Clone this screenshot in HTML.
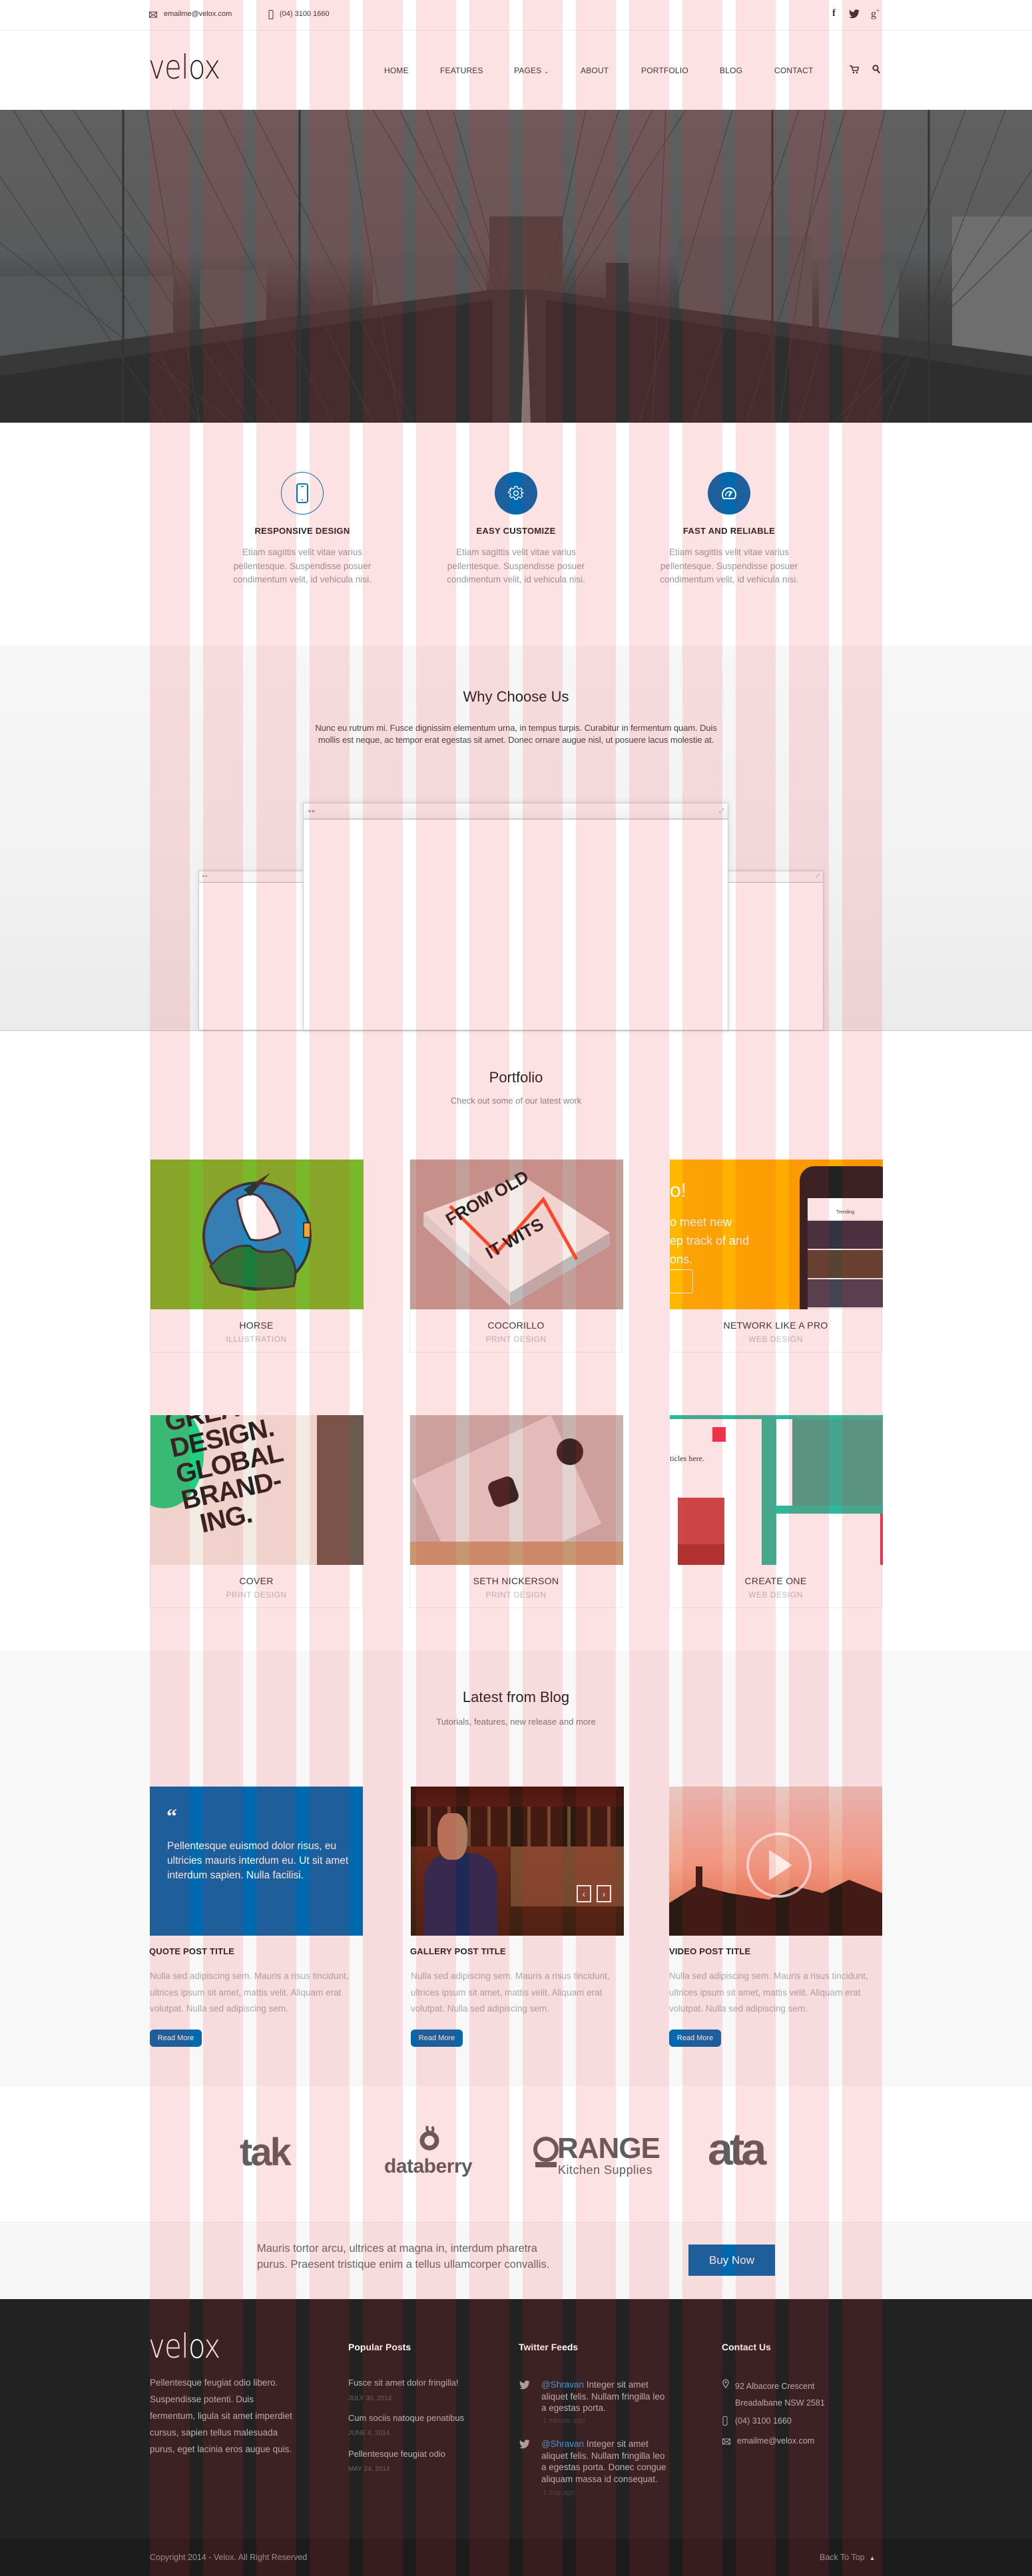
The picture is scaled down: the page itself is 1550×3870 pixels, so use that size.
<!DOCTYPE html>
<html><head><meta charset="utf-8">
<style>
*{margin:0;padding:0;box-sizing:border-box}
body{width:1550px;height:3870px;position:relative;background:#fff;font-family:"Liberation Sans",Arial,sans-serif;color:#333;overflow:hidden}
.a{position:absolute}
.c{text-align:center}
.stripes{position:absolute;left:225px;top:0;width:1100px;height:3870px;z-index:50;pointer-events:none;
background:repeating-linear-gradient(to right,rgba(235,35,35,.13) 0,rgba(235,35,35,.13) 60px,transparent 60px,transparent 80px)}
.nav span{position:absolute;top:99px;font-size:12px;color:#333;letter-spacing:.2px}
.ft{font-size:13px;font-weight:bold;color:#222;letter-spacing:.3px}
.fd{font-size:13.5px;color:#999;line-height:20.5px}
.card{position:absolute;width:320px;height:290px;border:1px solid #ececec;border-top:none;background:#fff}
.card .img{position:absolute;left:0;top:0;width:320px;height:225px;overflow:hidden}
.card .t{position:absolute;top:241px;width:100%;text-align:center;font-size:14px;color:#333;letter-spacing:.3px}
.card .s{position:absolute;top:263px;width:100%;text-align:center;font-size:12px;color:#bbb;letter-spacing:.5px}
.bt{position:absolute;font-size:13px;font-weight:bold;color:#222;letter-spacing:.2px}
.bx{position:absolute;font-size:13.5px;color:#aaa;line-height:24.5px;width:320px}
.rm{position:absolute;width:78px;height:26px;background:#0068ad;border-radius:6px;color:#fff;font-size:11px;text-align:center;line-height:26px}
.fw{color:#bbb;font-size:13px}
.fh{color:#fff;font-size:14px;font-weight:bold}
.fdt{color:#666;font-size:10px}
</style></head><body>
<div class="stripes"></div>

<!-- top bar -->
<div class="a" style="left:0;top:45px;width:1550px;height:1px;background:#eee"></div>
<svg class="a" style="left:224px;top:16px" width="12" height="12" viewBox="0 0 12 12"><rect x=".5" y="2" width="11" height="8" fill="none" stroke="#333"/><path d="M.5 2 6 7 11.5 2M.5 10 5 6M11.5 10 7 6" fill="none" stroke="#333"/></svg>
<div class="a" style="left:246px;top:15px;font-size:11px;color:#333">emailme@velox.com</div>
<svg class="a" style="left:403px;top:15px" width="8" height="14"><rect x="1" y=".5" width="6" height="13" rx="1.5" fill="none" stroke="#333"/></svg>
<div class="a" style="left:420px;top:15px;font-size:11px;color:#333">(04) 3100 1660</div>
<div class="a" style="left:1250px;top:12px;font-size:15px;font-weight:bold;color:#333;font-family:'Liberation Serif',serif">f</div>
<svg class="a" style="left:1275px;top:14px" width="16" height="14" viewBox="0 0 24 20"><path d="M24 2.4a9.8 9.8 0 0 1-2.8.8A4.9 4.9 0 0 0 23.3.4a9.9 9.9 0 0 1-3.1 1.2A4.9 4.9 0 0 0 11.8 6 14 14 0 0 1 1.7.9a4.9 4.9 0 0 0 1.5 6.6A4.9 4.9 0 0 1 1 6.9a4.9 4.9 0 0 0 3.9 4.8 4.9 4.9 0 0 1-2.2.1 4.9 4.9 0 0 0 4.6 3.4A9.9 9.9 0 0 1 0 17.3 14 14 0 0 0 7.5 19.5c9.1 0 14-7.5 14-14v-.6A10 10 0 0 0 24 2.4z" fill="#333"/></svg>
<div class="a" style="left:1308px;top:11px;font-size:16px;color:#333;font-family:'Liberation Serif',serif">g<sup style="font-size:9px">+</sup></div>

<!-- header -->
<div class="a" style="left:223px;top:72px;font-size:50px;font-weight:300;color:#222;letter-spacing:-1px;font-family:'DejaVu Sans','Liberation Sans',sans-serif;transform:scaleX(.84);transform-origin:left">velox</div>
<div class="nav">
<span style="left:577px">HOME</span>
<span style="left:661px">FEATURES</span>
<span style="left:772px">PAGES <span style="position:static;font-size:9px">&#8964;</span></span>
<span style="left:872px">ABOUT</span>
<span style="left:963px">PORTFOLIO</span>
<span style="left:1081px">BLOG</span>
<span style="left:1163px">CONTACT</span>
</div>
<svg class="a" style="left:1276px;top:98px" width="14" height="13" viewBox="0 0 14 13"><path d="M0 1h3l2 7h7l1.5-5H4" fill="none" stroke="#333" stroke-width="1.6"/><circle cx="6" cy="11" r="1.3" fill="#333"/><circle cx="11" cy="11" r="1.3" fill="#333"/></svg>
<svg class="a" style="left:1310px;top:97px" width="12" height="14" viewBox="0 0 12 14"><circle cx="5" cy="5" r="3.6" fill="none" stroke="#333" stroke-width="2"/><path d="M7.5 8 11 13" stroke="#333" stroke-width="2.2"/></svg>

<!-- hero -->
<svg class="a" style="left:0;top:165px" width="1550" height="470" viewBox="0 0 1550 470">
<defs><linearGradient id="hg" x1="0" y1="0" x2="0" y2="1"><stop offset="0" stop-color="#606060"/><stop offset=".45" stop-color="#5a5b5c"/><stop offset=".62" stop-color="#434344"/><stop offset="1" stop-color="#303030"/></linearGradient></defs>
<rect width="1550" height="470" fill="url(#hg)"/>
<g fill="#545859">
<rect x="0" y="250" width="260" height="120"/><rect x="300" y="240" width="100" height="130"/><rect x="560" y="220" width="170" height="150"/><rect x="1020" y="190" width="200" height="180"/><rect x="1230" y="230" width="120" height="140"/><rect x="1430" y="160" width="120" height="210" fill="#6e6e6e"/>
</g>
<path d="M735 160h110v220h-110z" fill="#474545"/>
<path d="M0 370 740 270 810 270 1550 370V470H0z" fill="#383838"/>
<path d="M0 400 740 285V470H0zM1550 400 820 285V470h730z" fill="#2e2e2e"/>
<path d="M790 270 797 470H783z" fill="#aaa" opacity=".6"/>
<g stroke="#333" stroke-width="3" fill="none">
<path d="M185 0V470M450 0V470M1395 0V470M1160 0V470"/>
</g>
<g stroke="#3e3e3e" stroke-width="1" fill="none">
<path d="M20 0 300 470M60 0 380 470M110 0 420 470M260 0 500 470M330 0 560 470M380 0 620 470M560 0 730 280M600 0 740 280M640 0 750 280M680 0 760 280M880 0 820 280M930 0 830 280M980 0 840 280M1030 0 850 280M1100 0 960 470M1200 0 1040 470M1270 0 1120 470M1330 0 1200 470M1450 0 1270 470M1510 0 1330 470M0 200 350 470M1550 180 1250 470M0 100 250 470M1550 90 1300 470M220 0 300 470M520 0 600 470M1000 0 980 470M1240 0 1170 470"/>
</g>
<path d="M910 230h34v60h-34z" fill="#3a3a3a"/>
</svg>

<!-- features -->
<div class="a" style="left:422px;top:709px;width:64px;height:64px;border:1px solid #0071bc;border-radius:50%"></div>
<svg class="a" style="left:444px;top:726px" width="20" height="30"><rect x="2" y="1" width="16" height="28" rx="3" fill="none" stroke="#0071bc" stroke-width="2"/><circle cx="10" cy="25" r="1" fill="#0071bc"/><rect x="8" y="4" width="4" height="1.5" fill="#0071bc"/></svg>
<div class="a" style="left:743px;top:709px;width:64px;height:64px;background:#0069b0;border-radius:50%"></div>
<svg class="a" style="left:763px;top:729px" width="24" height="24" viewBox="0 0 24 24"><path d="M10 2h4l.6 3 2.3 1 2.6-1.7 2.8 2.8L20.6 9.6l1 2.3 3 .6v0l-3 .6-1 2.3 1.7 2.6-2.8 2.8-2.6-1.7-2.3 1L14 23h-4l-.6-3-2.3-1-2.6 1.7-2.8-2.8 1.7-2.6-1-2.3-3-.6v-2l3-.6 1-2.3L1.7 7.1 4.5 4.3l2.6 1.7 2.3-1z" fill="none" stroke="#fff" stroke-width="1.5" transform="scale(.92) translate(1,0)"/><circle cx="12" cy="12" r="3.5" fill="none" stroke="#fff" stroke-width="1.5"/></svg>
<div class="a" style="left:1063px;top:709px;width:64px;height:64px;background:#0069b0;border-radius:50%"></div>
<svg class="a" style="left:1082px;top:729px" width="26" height="24" viewBox="0 0 26 24"><path d="M5 20A10 10 0 1 1 21 20Z" fill="none" stroke="#fff" stroke-width="2"/><path d="M8 16A6 6 0 0 1 18 11" fill="none" stroke="#fff" stroke-width="1.6"/><path d="M13 17 16 10" stroke="#fff" stroke-width="2.5"/></svg>

<div class="a c ft" style="left:254px;top:790px;width:400px">RESPONSIVE DESIGN</div>
<div class="a c ft" style="left:575px;top:790px;width:400px">EASY CUSTOMIZE</div>
<div class="a c ft" style="left:895px;top:790px;width:400px">FAST AND RELIABLE</div>
<div class="a c fd" style="left:294px;top:820px;width:320px">Etiam sagittis velit vitae varius<br>pellentesque. Suspendisse posuer<br>condimentum velit, id vehicula nisi.</div>
<div class="a c fd" style="left:615px;top:820px;width:320px">Etiam sagittis velit vitae varius<br>pellentesque. Suspendisse posuer<br>condimentum velit, id vehicula nisi.</div>
<div class="a c fd" style="left:935px;top:820px;width:320px">Etiam sagittis velit vitae varius<br>pellentesque. Suspendisse posuer<br>condimentum velit, id vehicula nisi.</div>

<!-- why choose us -->
<div class="a" style="left:0;top:970px;width:1550px;height:578px;background:linear-gradient(#f7f7f7,#f3f3f3 50%,#ebebeb)"></div>
<div class="a" style="left:0;top:1548px;width:1550px;height:1px;background:#ccc"></div>
<div class="a c" style="left:0;top:1034px;width:1550px;font-size:22px;color:#222">Why Choose Us</div>
<div class="a c" style="left:425px;top:1085px;width:700px;font-size:13px;color:#444;line-height:17.5px;letter-spacing:-.1px">Nunc eu rutrum mi. Fusce dignissim elementum urna, in tempus turpis. Curabitur in fermentum quam. Duis<br>mollis est neque, ac tempor erat egestas sit amet. Donec ornare augue nisl, ut posuere lacus molestie at.</div>
<div class="a" style="left:298px;top:1308px;width:170px;height:240px;background:#fff;border:1px solid #ccc;box-shadow:0 0 6px rgba(0,0,0,.1)"><div style="height:17px;border-bottom:1px solid #bbb;background:#f7f7f7;font-size:7px;color:#999;padding-left:4px;line-height:16px">◂ ▸</div></div>
<div class="a" style="left:1082px;top:1308px;width:155px;height:240px;background:#fff;border:1px solid #ccc;box-shadow:0 0 6px rgba(0,0,0,.1)"><div style="height:17px;border-bottom:1px solid #bbb;background:#f7f7f7;font-size:7px;color:#999;text-align:right;padding-right:5px;line-height:16px">⤢</div></div>
<div class="a" style="left:455px;top:1206px;width:639px;height:342px;background:#fff;border:1px solid #ccc;box-shadow:0 0 8px rgba(0,0,0,.12)"><div style="height:24px;border-bottom:1px solid #aaa;background:linear-gradient(#fafafa,#f0f0f0);font-size:9px;color:#999;padding:0 6px;line-height:23px">◂ ▸<span style="float:right">⤢</span></div></div>

<!-- portfolio -->
<div class="a c" style="left:0;top:1606px;width:1550px;font-size:22px;color:#222">Portfolio</div>
<div class="a c" style="left:0;top:1646px;width:1550px;font-size:13px;color:#888">Check out some of our latest work</div>

<div class="card" style="left:225px;top:1742px"><div class="img" style="background:#79b82a">
<svg width="320" height="225"><circle cx="160" cy="115" r="80" fill="#1a8cc8" stroke="#333" stroke-width="4"/><path d="M90 160Q120 125 150 130 165 145 200 135 225 155 215 190 160 200 105 185Z" fill="#1b7b3a" stroke="#333" stroke-width="3"/><path d="M130 60Q160 40 175 70 190 90 195 110 170 125 150 120 135 95 130 60Z" fill="#fff" stroke="#333" stroke-width="3"/><path d="M140 45l10 10 30-35z" fill="#333"/><rect x="230" y="95" width="10" height="22" fill="#f5a623" stroke="#333" stroke-width="2"/></svg></div>
<div class="t">HORSE</div><div class="s">ILLUSTRATION</div></div>

<div class="card" style="left:615px;top:1742px"><div class="img" style="background:#c29f98">
<svg width="320" height="225"><path d="M20 80 170 25 300 110 150 200Z" fill="#f3ece8"/><path d="M20 80 20 100 150 220 150 200Z" fill="#ddd"/><path d="M150 200 300 110 300 130 150 220Z" fill="#bbb"/><path d="M60 70 130 140 200 60 250 150" fill="none" stroke="#ff4a2a" stroke-width="5"/><text x="60" y="100" font-size="26" font-weight="bold" fill="#222" transform="rotate(-30 60 100)" font-family="Liberation Sans">FROM OLD</text><text x="120" y="150" font-size="26" font-weight="bold" fill="#222" transform="rotate(-30 120 150)" font-family="Liberation Sans">IT WITS</text></svg></div>
<div class="t">COCORILLO</div><div class="s">PRINT DESIGN</div></div>

<div class="card" style="left:1005px;top:1742px"><div class="img" style="background:linear-gradient(90deg,#ffb800,#ffa300)">
<div class="a" style="left:0;top:30px;color:#fff;font-size:30px">o!</div>
<div class="a" style="left:0;top:80px;color:#fff;font-size:18px;line-height:28px">o meet new<br>ep track of and<br>ons.</div>
<div class="a" style="left:-5px;top:165px;width:40px;height:36px;border:1px solid #fff;border-radius:4px"></div>
<div class="a" style="left:195px;top:10px;width:140px;height:240px;background:#222;border-radius:22px"></div>
<div class="a" style="left:207px;top:58px;width:113px;height:170px;background:#eee"><div style="height:32px;background:#fff;font-size:7px;text-align:center;padding-top:18px">Trending</div><div style="height:42px;background:#334;margin:2px 0"></div><div style="height:42px;background:#543;margin:2px 0"></div><div style="height:42px;background:#445"></div></div>
</div>
<div class="t">NETWORK LIKE A PRO</div><div class="s">WEB DESIGN</div></div>

<div class="card" style="left:225px;top:2126px"><div class="img" style="background:#f2ebe4">
<div class="a" style="left:-40px;top:-20px;width:120px;height:160px;background:#1fd080;border-radius:50%"></div>
<div class="a" style="left:250px;top:0;width:70px;height:225px;background:#6b5a4f"></div>
<div class="a" style="left:18px;top:-8px;font-size:40px;font-weight:bold;line-height:40px;color:#222;transform:rotate(-12deg);transform-origin:left top;letter-spacing:-1px">GREAT<br>DESIGN.<br>GLOBAL<br>BRAND-<br>&nbsp;&nbsp;ING.</div>
</div>
<div class="t">COVER</div><div class="s">PRINT DESIGN</div></div>

<div class="card" style="left:615px;top:2126px"><div class="img" style="background:#c9b3af">
<div class="a" style="left:30px;top:40px;width:230px;height:180px;background:#e2d3d0;transform:rotate(-25deg)"></div>
<div class="a" style="left:120px;top:95px;width:40px;height:40px;background:#3a2424;border-radius:10px;transform:rotate(-20deg)"></div>
<div class="a" style="left:220px;top:35px;width:40px;height:40px;background:#3a2424;border-radius:50%"></div>
<div class="a" style="left:0;top:190px;width:320px;height:35px;background:#c79772"></div>
</div>
<div class="t">SETH NICKERSON</div><div class="s">PRINT DESIGN</div></div>

<div class="card" style="left:1005px;top:2126px"><div class="img" style="background:#2fb99c">
<div class="a" style="left:0;top:6px;width:138px;height:219px;background:#fff"><div style="position:absolute;left:64px;top:12px;width:20px;height:22px;background:#f0344e"></div><div style="position:absolute;left:0;top:52px;font-family:'Liberation Serif',serif;font-size:12px">ticles here.</div><div style="position:absolute;left:12px;top:118px;width:70px;height:70px;background:#c84a4a"></div><div style="position:absolute;left:12px;top:188px;width:70px;height:31px;background:#a33"></div></div>
<div class="a" style="left:160px;top:6px;width:160px;height:130px;background:#fff"><div style="position:absolute;left:24px;top:0;width:136px;height:130px;background:#45a58e"></div></div>
<div class="a" style="left:160px;top:148px;width:160px;height:77px;background:#fff"><div style="position:absolute;right:0;top:0;width:4px;height:77px;background:#f0344e"></div></div>
</div>
<div class="t">CREATE ONE</div><div class="s">WEB DESIGN</div></div>

<!-- blog -->
<div class="a" style="left:0;top:2480px;width:1550px;height:654px;background:#f8f8f8"></div>
<div class="a c" style="left:0;top:2537px;width:1550px;font-size:22px;color:#222">Latest from Blog</div>
<div class="a c" style="left:0;top:2579px;width:1550px;font-size:13px;color:#777">Tutorials, features, new release and more</div>

<div class="a" style="left:225px;top:2684px;width:320px;height:224px;background:#0068ad"></div>
<div class="a" style="left:250px;top:2710px;font-size:32px;color:#fff;font-family:'Liberation Serif',serif;font-weight:bold">“</div>
<div class="a" style="left:251px;top:2763px;width:290px;font-size:15.5px;color:#fff;line-height:22px">Pellentesque euismod dolor risus, eu ultricies mauris interdum eu. Ut sit amet interdum sapien. Nulla facilisi.</div>

<div class="a" style="left:617px;top:2684px;width:320px;height:224px;background:linear-gradient(#3a1410,#5a2a18 40%,#3a2010);overflow:hidden">
<div class="a" style="left:0;top:30px;width:320px;height:60px;background:repeating-linear-gradient(90deg,#2a1a10 0 25px,#6a4a30 25px 30px)"></div>
<div class="a" style="left:150px;top:90px;width:170px;height:90px;background:#8a5a3a;opacity:.7"></div>
<div class="a" style="left:20px;top:100px;width:110px;height:124px;background:#1e2a55;border-radius:40px 40px 0 0"></div>
<div class="a" style="left:40px;top:40px;width:45px;height:70px;background:#b07a60;border-radius:40%"></div>
<div class="a" style="left:249px;top:148px;width:22px;height:26px;border:2px solid #fff;color:#fff;font-size:14px;text-align:center;line-height:22px">‹</div>
<div class="a" style="left:279px;top:148px;width:22px;height:26px;border:2px solid #fff;color:#fff;font-size:14px;text-align:center;line-height:22px">›</div>
</div>

<div class="a" style="left:1005px;top:2684px;width:320px;height:224px;background:linear-gradient(#e8c8c4,#f2a890 50%,#e88a6a 75%,#5a3a30);overflow:hidden">
<svg class="a" style="left:0;top:0" width="320" height="224"><path d="M0 175 40 150V120h10v30l40 10 60 10 40-20 40 10 40-20 50 20V224H0Z" fill="#2a1a14"/><circle cx="165" cy="118" r="47" fill="none" stroke="rgba(255,255,255,.75)" stroke-width="4"/><path d="M150 95 185 118 150 141Z" fill="rgba(255,255,255,.8)"/></svg>
</div>

<div class="bt" style="left:224px;top:2924px">QUOTE POST TITLE</div>
<div class="bt" style="left:616px;top:2924px">GALLERY POST TITLE</div>
<div class="bt" style="left:1005px;top:2924px">VIDEO POST TITLE</div>
<div class="bx" style="left:225px;top:2957px">Nulla sed adipiscing sem. Mauris a risus tincidunt, ultrices ipsum sit amet, mattis velit. Aliquam erat volutpat. Nulla sed adipiscing sem.</div>
<div class="bx" style="left:617px;top:2957px">Nulla sed adipiscing sem. Mauris a risus tincidunt, ultrices ipsum sit amet, mattis velit. Aliquam erat volutpat. Nulla sed adipiscing sem.</div>
<div class="bx" style="left:1005px;top:2957px">Nulla sed adipiscing sem. Mauris a risus tincidunt, ultrices ipsum sit amet, mattis velit. Aliquam erat volutpat. Nulla sed adipiscing sem.</div>
<div class="rm" style="left:225px;top:3049px">Read More</div>
<div class="rm" style="left:617px;top:3049px">Read More</div>
<div class="rm" style="left:1005px;top:3049px">Read More</div>

<!-- clients -->
<div class="a" style="left:360px;top:3200px;font-size:58px;font-weight:bold;color:#5e5e5e;letter-spacing:-3px">tak</div>
<svg class="a" style="left:630px;top:3192px" width="30" height="40" viewBox="0 0 30 40"><circle cx="15" cy="24" r="11" fill="none" stroke="#5e5e5e" stroke-width="7"/><path d="M12 2q-2 6 2 9M19 3q3 4 0 8" stroke="#5e5e5e" stroke-width="4" fill="none"/></svg>
<div class="a" style="left:577px;top:3238px;font-size:30px;font-weight:bold;color:#5e5e5e;letter-spacing:-.5px">databerry</div>
<svg class="a" style="left:800px;top:3205px" width="40" height="55"><circle cx="20" cy="24" r="16" fill="none" stroke="#5e5e5e" stroke-width="6"/><path d="M4 43h32v8H4z" fill="#5e5e5e"/></svg>
<div class="a" style="left:837px;top:3203px;font-size:44px;font-weight:bold;color:#5e5e5e;letter-spacing:-1px">RANGE</div>
<div class="a" style="left:838px;top:3250px;font-size:18px;color:#5e5e5e;letter-spacing:.5px">Kitchen Supplies</div>
<div class="a" style="left:1063px;top:3190px;font-size:68px;font-weight:bold;color:#5e5e5e;letter-spacing:-5px">ata</div>

<!-- CTA -->
<div class="a" style="left:0;top:3338px;width:1550px;height:116px;background:#f7f7f7;border-top:1px solid #eee"></div>
<div class="a" style="left:386px;top:3366px;font-size:16.5px;color:#666;line-height:24px">Mauris tortor arcu, ultrices at magna in, interdum pharetra<br>purus. Praesent tristique enim a tellus ullamcorper convallis.</div>
<div class="a c" style="left:1034px;top:3372px;width:130px;height:47px;background:#0068ad;color:#fff;font-size:17px;line-height:47px">Buy Now</div>

<!-- footer -->
<div class="a" style="left:0;top:3454px;width:1550px;height:360px;background:#222"></div>
<div class="a" style="left:0;top:3814px;width:1550px;height:56px;background:#1c1c1c"></div>
<div class="a" style="left:223px;top:3496px;font-size:50px;font-weight:300;color:#fff;letter-spacing:-1px;font-family:'DejaVu Sans','Liberation Sans',sans-serif;transform:scaleX(.84);transform-origin:left">velox</div>
<div class="a fw" style="left:225px;top:3567px;width:222px;line-height:25px;font-size:13.5px">Pellentesque feugiat odio libero. Suspendisse potenti. Duis fermentum, ligula sit amet imperdiet cursus, sapien tellus malesuada purus, eget lacinia eros augue quis.</div>

<div class="a fh" style="left:523px;top:3518px">Popular Posts</div>
<div class="a fw" style="left:523px;top:3572px">Fusce sit amet dolor fringilla!</div>
<div class="a fdt" style="left:523px;top:3598px">JULY 30, 2014</div>
<div class="a fw" style="left:523px;top:3625px">Cum sociis natoque penatibus</div>
<div class="a fdt" style="left:523px;top:3650px">JUNE 4, 2014</div>
<div class="a fw" style="left:523px;top:3679px">Pellentesque feugiat odio</div>
<div class="a fdt" style="left:523px;top:3704px">MAY 24, 2014</div>

<div class="a fh" style="left:779px;top:3518px">Twitter Feeds</div>
<svg class="a" style="left:780px;top:3576px" width="16" height="14" viewBox="0 0 24 20"><path d="M24 2.4a9.8 9.8 0 0 1-2.8.8A4.9 4.9 0 0 0 23.3.4a9.9 9.9 0 0 1-3.1 1.2A4.9 4.9 0 0 0 11.8 6 14 14 0 0 1 1.7.9a4.9 4.9 0 0 0 1.5 6.6A4.9 4.9 0 0 1 1 6.9a4.9 4.9 0 0 0 3.9 4.8 4.9 4.9 0 0 1-2.2.1 4.9 4.9 0 0 0 4.6 3.4A9.9 9.9 0 0 1 0 17.3 14 14 0 0 0 7.5 19.5c9.1 0 14-7.5 14-14v-.6A10 10 0 0 0 24 2.4z" fill="#aaa"/></svg>
<div class="a fw" style="left:813px;top:3574px;width:196px;line-height:17.5px;font-size:13.5px"><span style="color:#3a9fe0">@Shravan</span> Integer sit amet aliquet felis. Nullam fringilla leo a egestas porta.</div>
<div class="a" style="left:815px;top:3631px;font-size:11px;color:#444">1 minute ago</div>
<svg class="a" style="left:780px;top:3665px" width="16" height="14" viewBox="0 0 24 20"><path d="M24 2.4a9.8 9.8 0 0 1-2.8.8A4.9 4.9 0 0 0 23.3.4a9.9 9.9 0 0 1-3.1 1.2A4.9 4.9 0 0 0 11.8 6 14 14 0 0 1 1.7.9a4.9 4.9 0 0 0 1.5 6.6A4.9 4.9 0 0 1 1 6.9a4.9 4.9 0 0 0 3.9 4.8 4.9 4.9 0 0 1-2.2.1 4.9 4.9 0 0 0 4.6 3.4A9.9 9.9 0 0 1 0 17.3 14 14 0 0 0 7.5 19.5c9.1 0 14-7.5 14-14v-.6A10 10 0 0 0 24 2.4z" fill="#aaa"/></svg>
<div class="a fw" style="left:813px;top:3663px;width:196px;line-height:17.5px;font-size:13.5px"><span style="color:#3a9fe0">@Shravan</span> Integer sit amet aliquet felis. Nullam fringilla leo a egestas porta. Donec congue aliquam massa id consequat.</div>
<div class="a" style="left:815px;top:3739px;font-size:11px;color:#444">1 day ago</div>

<div class="a fh" style="left:1084px;top:3518px">Contact Us</div>
<svg class="a" style="left:1085px;top:3574px" width="10" height="14"><path d="M5 13C1 8 1 6 1 5a4 4 0 0 1 8 0c0 1 0 3-4 8z" fill="none" stroke="#aaa" stroke-width="1.3"/><circle cx="5" cy="5" r="1.4" fill="#aaa"/></svg>
<div class="a fw" style="left:1104px;top:3573px;line-height:24.5px;font-size:12.5px">92 Albacore Crescent<br>Breadalbane NSW 2581</div>
<svg class="a" style="left:1085px;top:3630px" width="8" height="14"><rect x="1" y=".5" width="6" height="13" rx="1.5" fill="none" stroke="#aaa"/></svg>
<div class="a fw" style="left:1104px;top:3630px;font-size:12.5px">(04) 3100 1660</div>
<svg class="a" style="left:1085px;top:3662px" width="12" height="12" viewBox="0 0 12 12"><rect x=".5" y="2" width="11" height="8" fill="none" stroke="#aaa"/><path d="M.5 2 6 7 11.5 2M.5 10 5 6M11.5 10 7 6" fill="none" stroke="#aaa"/></svg>
<div class="a fw" style="left:1107px;top:3660px;font-size:12.5px">emailme@velox.com</div>

<div class="a" style="left:225px;top:3835px;font-size:12.5px;color:#999">Copyright 2014 - Velox. All Right Reserved</div>
<div class="a" style="left:1231px;top:3835px;font-size:12.5px;color:#999">Back To Top &nbsp;<span style="color:#ddd;font-size:9px">&#9650;</span></div>
</body></html>
